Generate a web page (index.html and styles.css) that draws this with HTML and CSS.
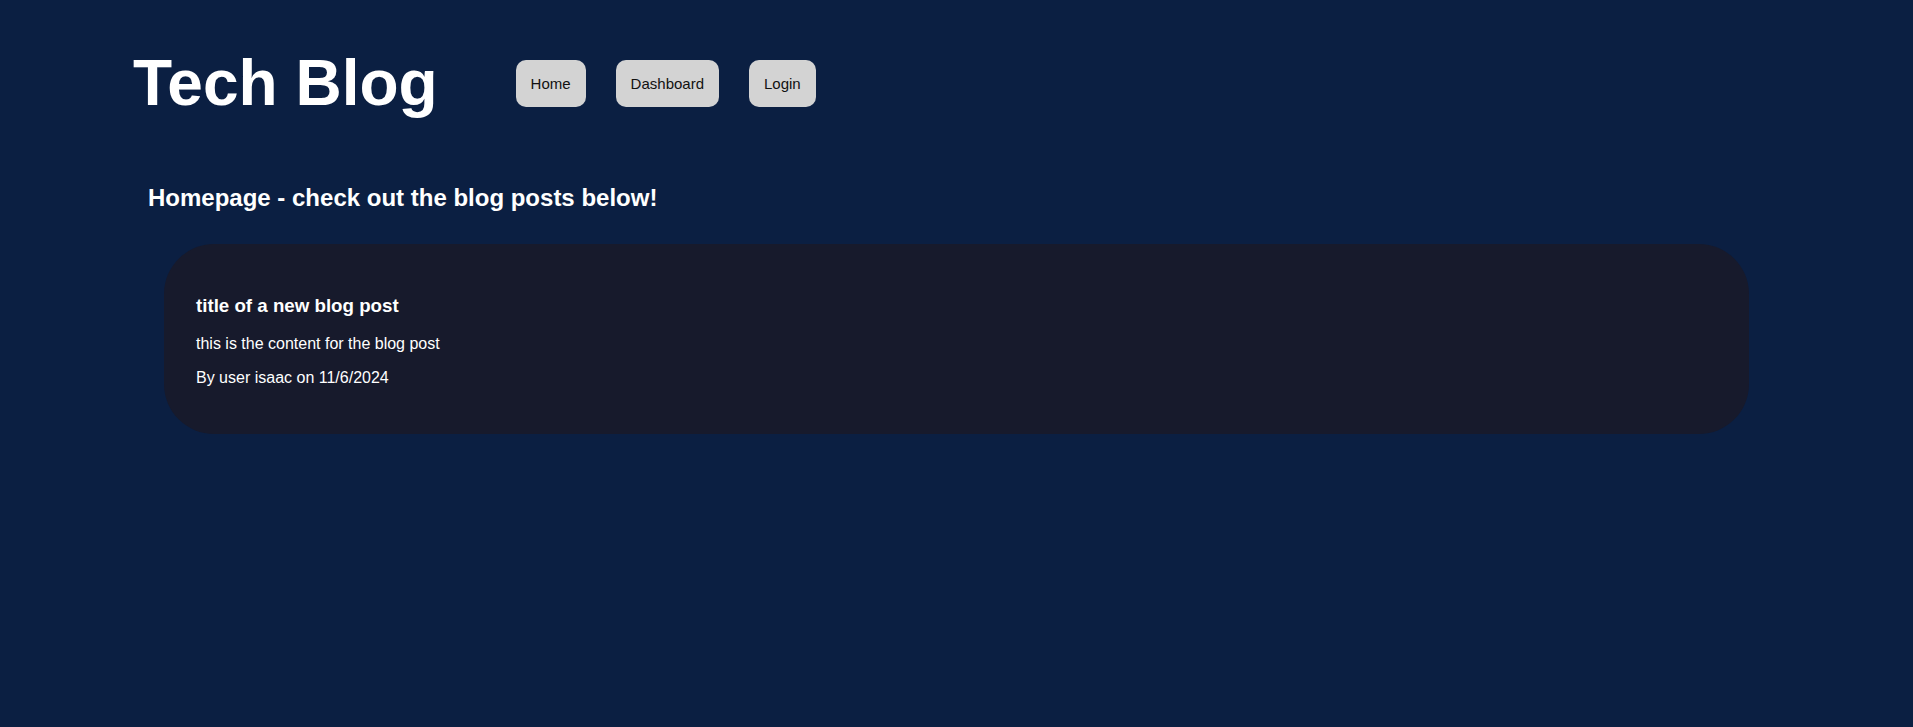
FILE: index.html
```html
<!DOCTYPE html>
<html lang="en">
<head>
<meta charset="utf-8">
<title>Tech Blog</title>
<link rel="stylesheet" href="styles.css">
</head>
<body>
<header class="site-header">
  <h1 class="site-title">Tech Blog</h1>
  <nav class="site-nav">
    <button class="nav-btn">Home</button>
    <button class="nav-btn">Dashboard</button>
    <button class="nav-btn">Login</button>
  </nav>
</header>
<main class="page">
  <h2 class="page-heading">Homepage - check out the blog posts below!</h2>
  <article class="post-card">
    <h3 class="post-title">title of a new blog post</h3>
    <p class="post-text">this is the content for the blog post</p>
    <p class="post-text">By user isaac on 11/6/2024</p>
  </article>
</main>
</body>
</html>
```
FILE: styles.css
```css
html, body {
  margin: 0;
  padding: 0;
}
body {
  background: #0b1f42;
  color: #ffffff;
  font-family: "Liberation Sans", Arial, sans-serif;
  min-height: 727px;
}
.site-header {
  display: flex;
  align-items: center;
  padding: 46px 0 0 133px;
}
.site-title {
  margin: 0 78px 0 0;
  font-size: 64px;
  font-weight: bold;
  line-height: normal;
}
.site-nav {
  display: flex;
  gap: 30px;
}
.nav-btn {
  font-family: "Liberation Sans", Arial, sans-serif;
  font-size: 15px;
  line-height: normal;
  padding: 15px;
  border: none;
  border-radius: 10px;
  background: #d3d3d3;
  color: #111111;
}
.page {
  padding: 0 148px;
}
.page-heading {
  margin: 64px 0 32px;
  font-size: 24px;
  font-weight: bold;
}
.post-card {
  margin: 0 16px;
  padding: 32px 32px 31px;
  background: #171a2c;
  border-radius: 50px;
}
.post-title {
  margin: 18.72px 0;
  font-size: 18.72px;
  font-weight: bold;
}
.post-text {
  margin: 16px 0;
  font-size: 16px;
}
```
